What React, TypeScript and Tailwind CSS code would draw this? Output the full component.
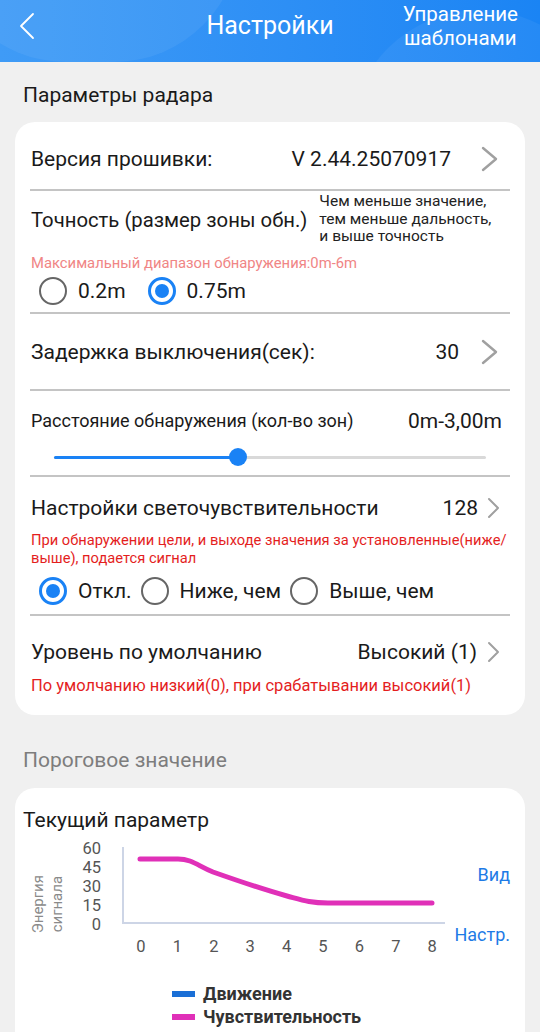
import { ReactNode } from "react";

function Chevron({ small = false }: { small?: boolean }) {
  if (small) {
    return (
      <svg width="13" height="22" viewBox="0 0 13 22" className="shrink-0">
        <polyline points="2,2 11,11 2,20" fill="none" stroke="#a0a0a0" strokeWidth="2" strokeLinecap="round" strokeLinejoin="round" />
      </svg>
    );
  }
  return (
    <svg width="17" height="26" viewBox="0 0 17 26" className="shrink-0">
      <polyline points="2,2 15,13 2,24" fill="none" stroke="#a0a0a0" strokeWidth="2.4" strokeLinecap="round" strokeLinejoin="round" />
    </svg>
  );
}

function Radio({ checked, label }: { checked: boolean; label: string }) {
  return (
    <div className="flex items-center gap-[11px]">
      {checked ? (
        <span className="flex h-[28px] w-[28px] items-center justify-center rounded-full border-[3px] border-[#1a82f5]">
          <span className="h-[14px] w-[14px] rounded-full bg-[#1a82f5]" />
        </span>
      ) : (
        <span className="h-[28px] w-[28px] rounded-full border-[2.5px] border-[#666666]" />
      )}
      <span className="text-[21px] leading-[24px] text-[#1a1a1a]">{label}</span>
    </div>
  );
}

function Divider() {
  return <div className="h-[2px] bg-[#c4c4c4]" />;
}

function Row({ children, className }: { children: ReactNode; className?: string }) {
  return <div className={"flex items-center justify-between pl-px " + (className ?? "")}>{children}</div>;
}

function Chart() {
  const xs = [0, 1, 2, 3, 4, 5, 6, 7, 8];
  const ys = [
    { v: "60", y: 10 },
    { v: "45", y: 29 },
    { v: "30", y: 48 },
    { v: "15", y: 67 },
    { v: "0", y: 86 },
  ];
  return (
    <svg width="375" height="125" viewBox="0 0 375 125" className="shrink-0">
      <line x1="53" y1="9" x2="53" y2="85" stroke="#cdd5e6" strokeWidth="2" />
      <line x1="52" y1="85" x2="375" y2="85" stroke="#cdd5e6" strokeWidth="2" />
      {ys.map((t) => (
        <text key={t.v} x="31" y={t.y} textAnchor="end" dominantBaseline="central" fontSize="16.5" fill="#555555" fontFamily="Roboto, sans-serif">
          {t.v}
        </text>
      ))}
      {xs.map((i) => (
        <text key={i} x={71 + i * 36.4} y="108" textAnchor="middle" dominantBaseline="central" fontSize="16.5" fill="#555555" fontFamily="Roboto, sans-serif">
          {i}
        </text>
      ))}
      <path
        d="M70 21 L108 21 C122 21 128 28 143 34 C160 40 195 52 217 58 C232 62 240 65 258 65 L362 65"
        fill="none"
        stroke="#e030b8"
        strokeWidth="5"
        strokeLinecap="round"
        strokeLinejoin="round"
      />
    </svg>
  );
}

export default function App() {
  return (
    <div className="h-[1032px] w-[540px] overflow-hidden bg-[#f0f0f0] font-['Roboto',sans-serif] text-[#1a1a1a]">
      {/* Header */}
      <div className="relative h-[62px] overflow-hidden bg-gradient-to-r from-[#3f9bf6] to-[#1a84f4]">
        <div className="absolute left-[-60px] top-[-190px] h-[252px] w-[300px] rounded-full bg-white/[0.06]" />
        <div className="absolute left-[350px] top-[10px] h-[260px] w-[260px] rounded-full bg-white/[0.05]" />
        <div className="relative grid h-full grid-cols-[1fr_auto_1fr] items-center pb-[10px]">
          <div className="pl-[19px]">
            <svg width="16" height="28" viewBox="0 0 16 28">
              <polyline points="14,2 2,14 14,26" fill="none" stroke="#ffffff" strokeWidth="1.8" strokeLinecap="round" strokeLinejoin="round" />
            </svg>
          </div>
          <div className="text-[25px] leading-[30px] text-white">Настройки</div>
          <div className="flex justify-end pr-[22px]">
            <div className="text-center text-[20.5px] leading-[24px] text-white">
              Управление
              <br />
              шаблонами
            </div>
          </div>
        </div>
      </div>

      {/* Radar params */}
      <div className="px-[23px] pt-[21px] text-[21px] leading-[24px] text-[#1a1a1a]">Параметры радара</div>

      <div className="mx-[15px] mt-[15px] rounded-[20px] bg-white px-[15px]">
        <Row className="h-[67px] pt-[7px] pr-[12px]">
          <span className="text-[21px] leading-[24px]">Версия прошивки:</span>
          <div className="flex items-center gap-[30px]">
            <span className="text-[21px] leading-[24px]">V 2.44.25070917</span>
            <Chevron />
          </div>
        </Row>
        <Divider />

        <div className="h-[121px] pt-[2px]">
          <div className="flex h-[53px] items-center pl-px">
            <span className="text-[20.3px] leading-[24px]">Точность (размер зоны обн.)</span>
            <span className="ml-[12px] text-[15.5px] leading-[17.5px] text-[#222]">
              Чем меньше значение,
              <br />
              тем меньше дальность,
              <br />и выше точность
            </span>
          </div>
          <div className="mt-[8px] pl-px text-[14.8px] leading-[18px] text-[#f08585]">
            Максимальный диапазон обнаружения:0m-6m
          </div>
          <div className="mt-[4px] flex h-[30px] items-center gap-[22px] pl-[9px]">
            <Radio checked={false} label="0.2m" />
            <Radio checked label="0.75m" />
          </div>
        </div>
        <Divider />

        <Row className="h-[75px] pr-[12px]">
          <span className="text-[21px] leading-[24px]">Задержка выключения(сек):</span>
          <div className="flex items-center gap-[22px]">
            <span className="text-[21px] leading-[24px]">30</span>
            <Chevron />
          </div>
        </Row>
        <Divider />

        <div className="h-[84px] pt-[18px]">
          <Row className="h-[24px] pr-[8px]">
            <span className="text-[18px] leading-[24px]">Расстояние обнаружения (кол-во зон)</span>
            <span className="text-[21px] leading-[24px]">0m-3,00m</span>
          </Row>
          <div className="relative mx-[24px] mt-[15px] flex h-[18px] items-center">
            <div className="h-[3px] w-full rounded-full bg-[#d9d9d9]" />
            <div className="absolute left-0 top-[7.5px] h-[3px] w-[42.6%] rounded-full bg-[#1a82f5]" />
            <div className="absolute left-[42.6%] top-0 h-[18px] w-[18px] -translate-x-1/2 rounded-full bg-[#1a82f5]" />
          </div>
        </div>
        <Divider />

        <div className="h-[137px] pt-[19px]">
          <Row className="h-[24px] pr-[10px]">
            <span className="text-[21px] leading-[24px]">Настройки светочувствительности</span>
            <div className="flex items-center gap-[9px]">
              <span className="text-[21px] leading-[24px]">128</span>
              <Chevron small />
            </div>
          </Row>
          <div className="mt-[11px] pl-px text-[14.7px] leading-[18px] text-[#e41e1e]">
            При обнаружении цели, и выходе значения за установленные(ниже/
            <br />
            выше), подается сигнал
          </div>
          <div className="mt-[9px] flex h-[30px] items-center gap-[9px] pl-[9px]">
            <Radio checked label="Откл." />
            <Radio checked={false} label="Ниже, чем" />
            <Radio checked={false} label="Выше, чем" />
          </div>
        </div>
        <Divider />

        <div className="h-[99px] pt-[24px]">
          <Row className="h-[24px] pr-[10px]">
            <span className="text-[21px] leading-[24px]">Уровень по умолчанию</span>
            <div className="flex items-center gap-[10px]">
              <span className="text-[21px] leading-[24px]">Высокий (1)</span>
              <Chevron small />
            </div>
          </Row>
          <div className="mt-[12px] pl-px text-[16.5px] leading-[20px] text-[#e41e1e]">
            По умолчанию низкий(0), при срабатывании высокий(1)
          </div>
        </div>
      </div>

      {/* Threshold */}
      <div className="px-[23px] pt-[33px] text-[21px] leading-[24px] text-[#7d7d7d]">Пороговое значение</div>

      <div className="mx-[15px] mt-[16px] rounded-t-[20px] bg-white pb-[40px] pt-[20px]">
        <div className="px-[8px] text-[21px] leading-[24px] text-[#1a1a1a]">Текущий параметр</div>
        <div className="mt-[6px] flex h-[125px]">
          <div className="flex w-[55px] items-center justify-center pl-[10px] pt-[8px]">
            <div className="rotate-180 text-center text-[15px] leading-[19px] text-[#8a8a8a] [writing-mode:vertical-rl]">
              Энергия
              <br />
              сигнала
            </div>
          </div>
          <Chart />
          <div className="flex flex-1 flex-col items-end pr-[15px] pt-[26px] text-[18px] leading-[22px] text-[#1e7be6]">
            <span>Вид</span>
            <span className="mt-[38px]">Настр.</span>
          </div>
        </div>
        <div className="mt-[19px] flex flex-col gap-0 pl-[157px]">
          <div className="flex h-[23px] items-center gap-[8px]">
            <span className="h-[6px] w-[23px] bg-[#1a6fd6]" />
            <span className="text-[18px] font-bold leading-[23px] text-[#333]">Движение</span>
          </div>
          <div className="flex h-[23px] items-center gap-[8px]">
            <span className="h-[6px] w-[23px] bg-[#e030b8]" />
            <span className="text-[18px] font-bold leading-[23px] text-[#333]">Чувствительность</span>
          </div>
        </div>
      </div>
    </div>
  );
}
